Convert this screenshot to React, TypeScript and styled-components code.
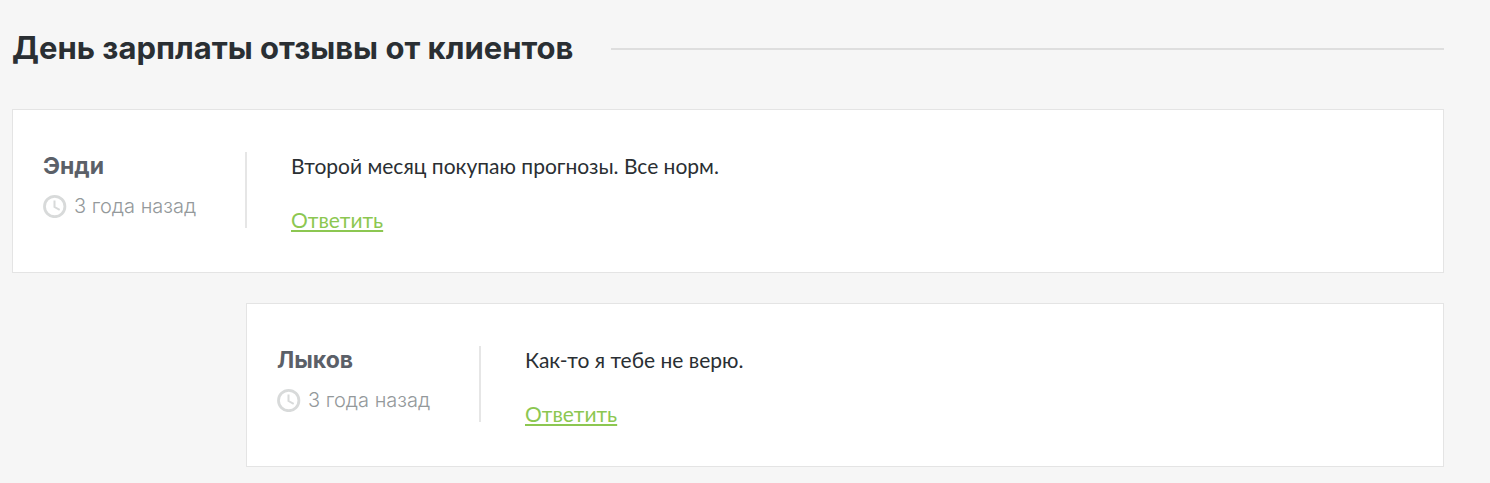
import React from "react";
import styled, { createGlobalStyle } from "styled-components";

const GlobalStyle = createGlobalStyle`
  *, *::before, *::after { box-sizing: border-box; }
  body {
    margin: 0;
    background: #f6f6f6;
    color: #2a2f33;
    font-family: Inter, "Open Sans", sans-serif;
  }
`;

const Section = styled.section`
  padding: 26px 46px 16px 12px;
`;

const Header = styled.header`
  display: flex;
  align-items: center;
  gap: 38px;
  margin-bottom: 39px;

  &::after {
    content: "";
    flex: 1;
    height: 2px;
    margin-top: 2px;
    background: #dedede;
  }
`;

const Title = styled.h2`
  margin: 0;
  font-size: 31px;
  line-height: 44px;
  font-weight: 700;
`;

const CommentList = styled.div`
  display: flex;
  flex-direction: column;
  gap: 30px;
`;

const Comment = styled.article<{ $reply?: boolean }>`
  display: flex;
  align-items: flex-start;
  margin-left: ${(p) => (p.$reply ? "234px" : "0")};
  padding: 42px 30px 38px;
  border: 1px solid #e4e4e4;
  background: #fff;
`;

const Meta = styled.div`
  flex: none;
  width: 204px;
  min-height: 76px;
  border-right: 2px solid #e6e6e6;
`;

const Author = styled.h3`
  margin: 0 0 11px;
  color: #5b6068;
  font-size: 23px;
  line-height: 28px;
  font-weight: 700;
`;

const Posted = styled.div`
  display: flex;
  align-items: center;
  gap: 7px;
  color: #94999b;
  font-size: 20px;
  line-height: 30px;
  font-weight: 300;
`;

const Clock = styled.svg`
  flex: none;
  width: 24px;
  height: 24px;
  fill: none;
  stroke: #d8dada;
`;

const Body = styled.div`
  flex: 1;
  padding-left: 44px;
  font-family: Lato, "Open Sans", sans-serif;
  font-size: 21px;
  line-height: 28px;
`;

const Message = styled.p`
  margin: 0 0 26px;
`;

const ReplyLink = styled.a`
  display: block;
  width: fit-content;
  color: #8cc751;
  text-decoration: underline;
  text-decoration-thickness: 2px;
  text-decoration-skip-ink: none;
  text-underline-offset: 2px;
`;

type CommentData = { author: string; posted: string; text: string; reply?: boolean };

const comments: CommentData[] = [
  { author: "Энди", posted: "3 года назад", text: "Второй месяц покупаю прогнозы. Все норм." },
  { author: "Лыков", posted: "3 года назад", text: "Как-то я тебе не верю.", reply: true },
];

export default function App() {
  return (
    <>
      <GlobalStyle />
      <Section>
        <Header>
          <Title>День зарплаты отзывы от клиентов</Title>
        </Header>
        <CommentList>
          {comments.map((c) => (
            <Comment key={c.author} $reply={c.reply}>
              <Meta>
                <Author>{c.author}</Author>
                <Posted>
                  <Clock viewBox="0 0 24 24" aria-hidden="true">
                    <circle cx="11.7" cy="12.5" r="10.2" strokeWidth="2.8" />
                    <path d="M11.5 6.4v6.6l5.2 2.9" strokeWidth="2" />
                  </Clock>
                  <time>{c.posted}</time>
                </Posted>
              </Meta>
              <Body>
                <Message>{c.text}</Message>
                <ReplyLink href="#reply">Ответить</ReplyLink>
              </Body>
            </Comment>
          ))}
        </CommentList>
      </Section>
    </>
  );
}
